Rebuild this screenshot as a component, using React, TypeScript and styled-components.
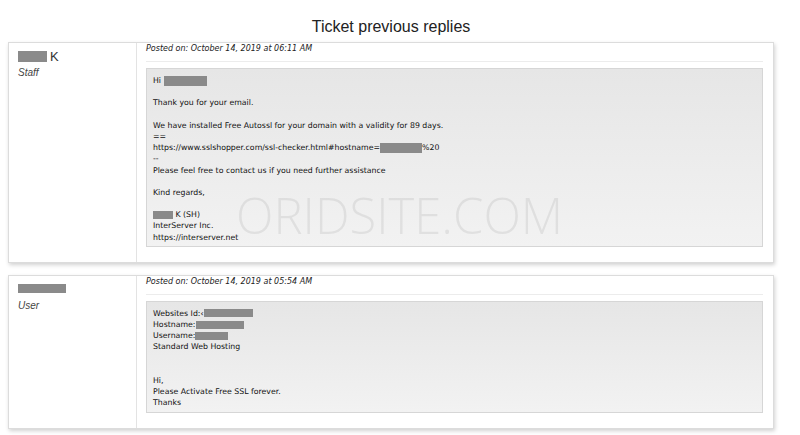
import React from 'react'
import styled, { createGlobalStyle } from 'styled-components'

const GlobalStyle = createGlobalStyle`
  html, body {
    margin: 0;
    padding: 0;
    background: #fff;
  }
  body {
    font-family: "Liberation Sans", Arial, sans-serif;
    color: #222;
  }
`

type Reply = {
  nameWidth: number
  nameSuffix?: string
  role: string
  posted: string
  lines: React.ReactNode[]
}

const Redact: React.FC<{ w: number; h?: number }> = ({ w, h = 10 }) => (
  <Blot style={{ width: w, height: h }} />
)

const replies: Reply[] = [
  {
    nameWidth: 29,
    nameSuffix: 'K',
    role: 'Staff',
    posted: 'Posted on: October 14, 2019 at 06:11 AM',
    lines: [
      <>Hi <Redact w={43} /></>,
      '',
      'Thank you for your email.',
      '',
      'We have installed Free Autossl for your domain with a validity for 89 days.',
      '==',
      <>https://www.sslshopper.com/ssl-checker.html#hostname=<Redact w={42} />%20</>,
      '--',
      'Please feel free to contact us if you need further assistance',
      '',
      'Kind regards,',
      '',
      <><Redact w={20} h={8} /> K (SH)</>,
      'InterServer Inc.',
      'https://interserver.net',
    ],
  },
  {
    nameWidth: 48,
    role: 'User',
    posted: 'Posted on: October 14, 2019 at 05:54 AM',
    lines: [
      <>Websites Id:‹<Redact w={49} h={8} /></>,
      <>Hostname:<Redact w={48} h={8} /></>,
      <>Username:<Redact w={33} h={8} /></>,
      'Standard Web Hosting',
      '',
      '',
      'Hi,',
      'Please Activate Free SSL forever.',
      'Thanks',
    ],
  },
]

const App: React.FC = () => {
  return (
    <>
      <GlobalStyle />
      <Page>
        <Title>Ticket previous replies</Title>
        {replies.map((r, i) => (
          <Card key={i}>
            <Author>
              <Name>
                <Redact w={r.nameWidth} h={r.nameSuffix ? 11 : 9} />
                {r.nameSuffix && <NameText>{r.nameSuffix}</NameText>}
              </Name>
              <Role>{r.role}</Role>
            </Author>
            <Body>
              <Posted>{r.posted}</Posted>
              <Message>
                {r.lines.map((l, j) => (
                  <Line key={j}>{l === '' ? '\u00a0' : l}</Line>
                ))}
              </Message>
            </Body>
          </Card>
        ))}
        <Watermark>ORIDSITE.COM</Watermark>
      </Page>
    </>
  )
}

const Page = styled.div`
  position: relative;
  width: 766px;
  margin-left: 8px;
  padding-top: 17px;
`

const Title = styled.h2`
  margin: 0 0 5px;
  font-size: 16px;
  font-weight: 400;
  text-align: center;
  color: #222;
  line-height: 20px;
`

const Card = styled.div`
  display: flex;
  border: 1px solid #dcdcdc;
  background: #fff;
  box-shadow: 1px 2px 4px rgba(0, 0, 0, 0.18);
  margin-bottom: 12px;
`

const Author = styled.div`
  width: 128px;
  flex-shrink: 0;
  border-right: 1px solid #e3e3e3;
  padding: 7px 0 0 9px;
  box-sizing: border-box;
`

const Name = styled.div`
  display: flex;
  align-items: center;
  height: 12px;
`

const NameText = styled.span`
  font-size: 13px;
  margin-left: 3px;
  color: #333;
`

const Role = styled.div`
  margin-top: 5px;
  font-size: 10px;
  font-style: italic;
  color: #444;
`

const Body = styled.div`
  flex: 1;
  padding: 0 10px 15px 9px;
`

const Posted = styled.div`
  font-family: "DejaVu Sans", Verdana, sans-serif;
  font-style: italic;
  font-size: 8px;
  line-height: 11px;
  color: #222;
  padding-bottom: 7px;
  border-bottom: 1px solid #ececec;
  margin-bottom: 6px;
`

const Message = styled.div`
  background: linear-gradient(#e6e6e6, #f2f2f2);
  border: 1px solid #d6d6d6;
  padding: 6px 6px 3px;
  font-family: "DejaVu Sans", Verdana, sans-serif;
  font-size: 7.8px;
  line-height: 11.2px;
  color: #111;
`

const Line = styled.div`
  white-space: pre;
  display: flex;
  align-items: center;
  height: 11.2px;
`

const Blot = styled.span`
  display: inline-block;
  background: #8a8a8a;
  vertical-align: middle;
`

const Watermark = styled.div`
  position: absolute;
  left: 228px;
  top: 191px;
  font-family: "Open Sans", Lato, sans-serif;
  font-weight: 300;
  font-size: 49px;
  line-height: 1;
  color: rgba(0, 0, 0, 0.07);
  pointer-events: none;
`

export default App
